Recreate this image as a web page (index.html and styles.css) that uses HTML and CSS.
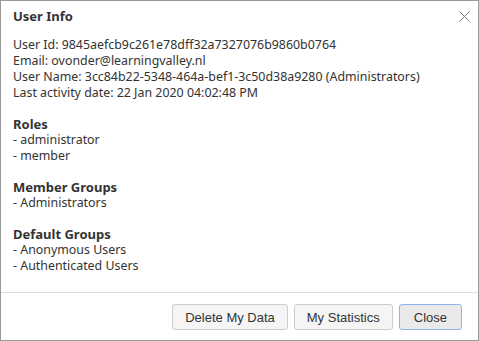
FILE: index.html
```html
<!DOCTYPE html>
<html lang="en">

<head>
    <meta charset="UTF-8">
    <meta name="viewport" content="width=device-width, initial-scale=1.0">
    <title>User Info</title>
    <link rel="stylesheet" href="styles.css">
</head>

<body>
    <div class="dialog">
        <div class="dialog-header">
            <h1>User Info</h1>
            <button class="close-icon" title="Close">
                <svg width="11" height="11" viewBox="0 0 11 11">
                    <path d="M0.5 0.5 L10.5 10.5 M10.5 0.5 L0.5 10.5" stroke="#777" stroke-width="1" fill="none" />
                </svg>
            </button>
        </div>
        <div class="dialog-body">
            <div class="section">
                <p>User Id: 9845aefcb9c261e78dff32a7327076b9860b0764</p>
                <p>Email: ovonder@learningvalley.nl</p>
                <p>User Name: 3cc84b22-5348-464a-bef1-3c50d38a9280 (Administrators)</p>
                <p>Last activity date: 22 Jan 2020 04:02:48 PM</p>
            </div>
            <div class="section">
                <h2>Roles</h2>
                <p>- administrator</p>
                <p>- member</p>
            </div>
            <div class="section">
                <h2>Member Groups</h2>
                <p>- Administrators</p>
            </div>
            <div class="section">
                <h2>Default Groups</h2>
                <p>- Anonymous Users</p>
                <p>- Authenticated Users</p>
            </div>
        </div>
        <div class="dialog-footer">
            <button class="btn">Delete My Data</button>
            <button class="btn">My Statistics</button>
            <button class="btn btn-focus">Close</button>
        </div>
    </div>
</body>

</html>
```

FILE: styles.css
```css
body {
    margin: 0;
    font-family: "Noto Sans", "DejaVu Sans", sans-serif;
    color: #333333;
    background: #ffffff;
}

.dialog {
    width: 479px;
    height: 341px;
    box-sizing: border-box;
    border: 1px solid #999999;
    display: flex;
    flex-direction: column;
}

.dialog-header {
    display: flex;
    justify-content: space-between;
    align-items: center;
    padding: 5px 8px 0 12px;
    height: 20px;
}

h1 {
    margin: 0;
    font-size: 13px;
    font-weight: bold;
}

.close-icon {
    border: none;
    background: none;
    padding: 0;
    width: 11px;
    height: 11px;
    display: flex;
    cursor: pointer;
}

.dialog-body {
    flex: 1;
    padding: 11px 12px 0;
}

.section {
    margin-bottom: 15px;
}

.section p {
    margin: 0;
    font-size: 12.4px;
    line-height: 16px;
}

h2 {
    margin: 0;
    font-size: 13px;
    font-weight: bold;
    line-height: 16px;
}

.dialog-footer {
    border-top: 1px solid #dddddd;
    display: flex;
    justify-content: flex-end;
    gap: 6px;
    padding: 11px 16px 10px;
}

.btn {
    font-family: "Liberation Sans", Arial, sans-serif;
    font-size: 13px;
    color: #333333;
    background: #f5f5f5;
    border: 1px solid #cccccc;
    border-radius: 3px;
    height: 26px;
    padding: 0 12px;
    cursor: pointer;
}

.btn:hover {
    background: #eaeaea;
}

.btn-focus {
    background: #eaeaea;
    border-color: #8fb3ee;
    padding: 0 14px;
}
```
